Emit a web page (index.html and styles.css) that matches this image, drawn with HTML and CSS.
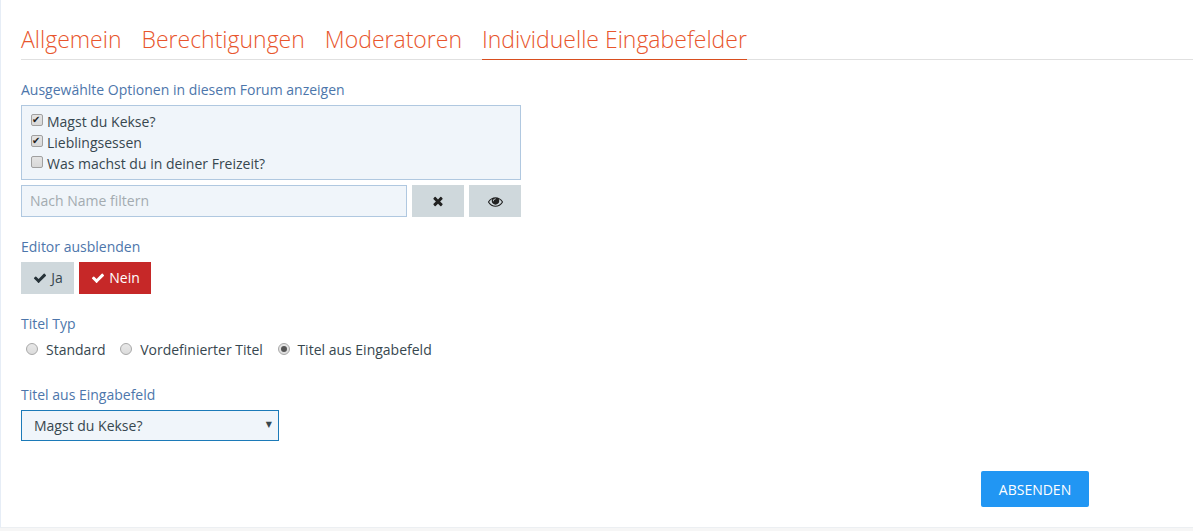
FILE: index.html
```html
<!DOCTYPE html>
<html lang="de">
<head>
<meta charset="utf-8">
<title>Individuelle Eingabefelder</title>
<link rel="stylesheet" href="styles.css">
</head>
<body>
<main class="panel">
  <nav class="tabs">
    <a class="tab">Allgemein</a>
    <a class="tab">Berechtigungen</a>
    <a class="tab">Moderatoren</a>
    <a class="tab tab-active">Individuelle Eingabefelder</a>
  </nav>

  <section class="field field-options">
    <div class="label">Ausgewählte Optionen in diesem Forum anzeigen</div>
    <div class="optbox">
      <label class="opt"><input class="check" type="checkbox" checked>Magst du Kekse?</label>
      <label class="opt"><input class="check" type="checkbox" checked>Lieblingsessen</label>
      <label class="opt"><input class="check" type="checkbox">Was machst du in deiner Freizeit?</label>
    </div>
    <div class="filter">
      <input class="filter-input" type="text" placeholder="Nach Name filtern">
      <button class="btn btn-icon" type="button"><svg class="ico ico-x" viewBox="0 0 1792 1792"><path d="M1490 1322q0 40-28 68l-136 136q-28 28-68 28t-68-28l-294-294-294 294q-28 28-68 28t-68-28l-136-136q-28-28-28-68t28-68l294-294-294-294q-28-28-28-68t28-68l136-136q28-28 68-28t68 28l294 294 294-294q28-28 68-28t68 28l136 136q28 28 28 68t-28 68l-294 294 294 294q28 28 28 68z"/></svg></button>
      <button class="btn btn-icon" type="button"><svg class="ico ico-eye" viewBox="0 0 1792 1792"><path d="M1664 960q-152-236-381-353 61 104 61 225 0 185-131.500 316.500t-316.500 131.500-316.500-131.500-131.500-316.500q0-121 61-225-229 117-381 353 133 205 333.500 326.500t434.500 121.500 434.500-121.500 333.500-326.500zm-720-384q0-20-14-34t-34-14q-125 0-214.500 89.500t-89.500 214.500q0 20 14 34t34 14 34-14 14-34q0-86 61-147t147-61q20 0 34-14t14-34zm848 384q0 34-20 69-140 230-376.500 368.500t-499.500 138.500-499.500-139-376.500-368q-20-35-20-69t20-69q140-229 376.500-368t499.500-139 499.500 139 376.500 368q20 35 20 69z"/></svg></button>
    </div>
  </section>

  <section class="field field-editor">
    <div class="label">Editor ausblenden</div>
    <div class="toggle">
      <button class="btn btn-yes" type="button"><svg class="ico ico-check" viewBox="0 0 1792 1792"><path d="M1671 566q0 40-28 68l-724 724-136 136q-28 28-68 28t-68-28l-136-136-362-362q-28-28-28-68t28-68l136-136q28-28 68-28t68 28l294 295 656-657q28-28 68-28t68 28l136 136q28 28 28 68z"/></svg>Ja</button>
      <button class="btn btn-no" type="button"><svg class="ico ico-check" viewBox="0 0 1792 1792"><path d="M1671 566q0 40-28 68l-724 724-136 136q-28 28-68 28t-68-28l-136-136-362-362q-28-28-28-68t28-68l136-136q28-28 68-28t68 28l294 295 656-657q28-28 68-28t68 28l136 136q28 28 28 68z"/></svg>Nein</button>
    </div>
  </section>

  <section class="field field-type">
    <div class="label">Titel Typ</div>
    <div class="radios">
      <label class="radio-opt"><input class="radio" type="radio" name="typ">Standard</label>
      <label class="radio-opt"><input class="radio" type="radio" name="typ">Vordefinierter Titel</label>
      <label class="radio-opt"><input class="radio" type="radio" name="typ" checked>Titel aus Eingabefeld</label>
    </div>
  </section>

  <section class="field field-select">
    <div class="label">Titel aus Eingabefeld</div>
    <div class="select-wrap">
      <select class="select"><option>Magst du Kekse?</option><option>Lieblingsessen</option></select>
    </div>
  </section>

  <div class="actions">
    <button class="submit" type="button">ABSENDEN</button>
  </div>
</main>
</body>
</html>
```

FILE: styles.css
```css
* { box-sizing: border-box; }
html, body { margin: 0; height: 531px; overflow: hidden; }
body {
  background: #f6f6f6;
  font-family: "Open Sans", sans-serif;
  font-size: 14px;
  color: #37474f;
}
.panel {
  height: 528px;
  background: #fff;
  border-left: 1px solid #e6edf6;
  border-bottom: 1px solid #eceff2;
  padding: 0 0 0 20px;
}
.tabs {
  display: flex;
  gap: 20px;
  height: 60px;
  border-bottom: 1px solid #e0e0e0;
  align-items: flex-end;
}
.tab {
  display: block;
  height: 34px;
  margin-bottom: -1px;
  font-size: 23px;
  font-weight: 300;
  line-height: 27px;
  color: #e8552c;
}
.tab-active { border-bottom: 1px solid #d84e1f; }
.label {
  color: #4d76ab;
  font-size: 14px;
  line-height: 20px;
}
.field-options { margin-top: 20px; }
.field-editor { margin-top: 20px; }
.field-type { margin-top: 20px; }
.field-select { margin-top: 25px; }
.optbox {
  width: 500px;
  height: 75px;
  margin-top: 5px;
  padding: 5px 10px;
  background: #f0f5fa;
  border: 1px solid #b0c8e0;
}
.opt {
  display: flex;
  align-items: center;
  height: 21px;
  color: #37474f;
}
.check {
  appearance: none;
  width: 12px;
  height: 12px;
  margin: 0 4px 3px -1px;
  border: 1px solid #a0a0a0;
  border-radius: 2px;
  background: linear-gradient(#e4e4e4, #d8d8d8);
  position: relative;
  flex: none;
}
.check:checked::after {
  content: "✔";
  position: absolute;
  left: 0;
  top: -1px;
  font: bold 10px/12px "DejaVu Sans", sans-serif;
  color: #222;
}
.filter {
  display: flex;
  width: 500px;
  gap: 5px;
  margin-top: 5px;
}
.filter-input {
  width: 386px;
  height: 32px;
  padding: 0 8px 2px;
  background: #f0f5fa;
  border: 1px solid #b0c8e0;
  font: 14px "Open Sans", sans-serif;
  color: #37474f;
  outline: none;
}
.filter-input::placeholder { color: #a3abb0; opacity: 1; }
.btn {
  display: flex;
  align-items: center;
  justify-content: center;
  height: 32px;
  border: 0;
  padding: 0;
  font: 14px "Open Sans", sans-serif;
  background: #cfd8dc;
  color: #37474f;
}
.btn-icon { width: 52px; color: #212121; }
.ico { display: block; fill: currentColor; flex: none; }
.ico-x { width: 14px; height: 14px; }
.ico-eye { width: 15px; height: 15px; }
.toggle {
  display: flex;
  gap: 5px;
  margin-top: 5px;
}
.btn-yes, .btn-no { padding-bottom: 2px; }
.btn-yes { width: 53px; }
.btn-no { width: 72px; background: #c62828; color: #fff; }
.ico-check { width: 14px; height: 14px; margin: 2px 4px 0 1px; }
.btn-yes .ico-check { color: #263238; }
.radios {
  display: flex;
  gap: 14.5px;
  margin-top: 6px;
  padding-left: 5px;
  line-height: 20px;
}
.radio-opt { display: flex; align-items: center; }
.radio {
  appearance: none;
  width: 12px;
  height: 12px;
  margin: 0 8px 3px 0;
  border: 1px solid #a8a8a8;
  border-radius: 50%;
  background: linear-gradient(#e8e8e8, #dcdcdc);
  position: relative;
  flex: none;
}
.radio:checked { margin-left: 1px; margin-right: 7px; }
.radio:checked::after {
  content: "";
  position: absolute;
  left: 2px;
  top: 2px;
  width: 6px;
  height: 6px;
  border-radius: 50%;
  background: #555;
}
.select-wrap {
  position: relative;
  width: 258px;
  margin-top: 5px;
}
.select-wrap::after {
  content: "▼";
  position: absolute;
  right: 7px;
  top: 10px;
  font: 8px/10px "DejaVu Sans", sans-serif;
  color: #37474f;
  pointer-events: none;
}
.select {
  appearance: none;
  display: block;
  width: 100%;
  height: 31px;
  padding: 0 12px;
  background: #f0f5fa;
  border: 1px solid #1c7ab8;
  border-radius: 0;
  font: 14px "Open Sans", sans-serif;
  color: #37474f;
  outline: none;
}
.actions {
  display: flex;
  justify-content: flex-end;
  margin-top: 30px;
  padding-right: 104px;
}
.submit {
  width: 108px;
  height: 36px;
  border: 0;
  border-radius: 2px;
  background: #2196f3;
  color: #fff;
  font: 14px "Open Sans", sans-serif;
}
```
